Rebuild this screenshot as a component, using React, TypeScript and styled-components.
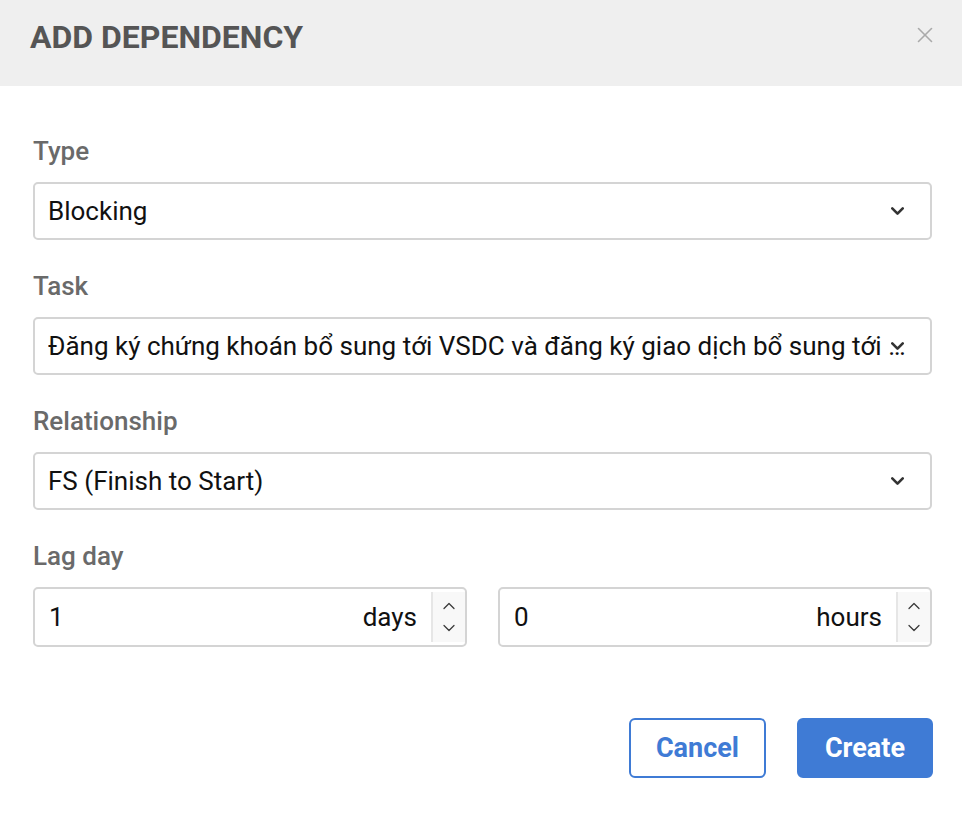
import React from 'react'
import styled, { createGlobalStyle } from 'styled-components'
import { ChevronDown, ChevronUp, X } from 'lucide-react'

const GlobalStyle = createGlobalStyle`
  html, body {
    margin: 0;
    padding: 0;
    background: #ffffff;
    font-family: Roboto, "Noto Sans", "Liberation Sans", sans-serif;
  }
  * { box-sizing: border-box; }
`

const Modal = styled.div`
  width: 962px;
  min-height: 824px;
  background: #fff;
`

const Header = styled.div`
  height: 86px;
  background: #efefef;
  display: flex;
  align-items: flex-start;
  justify-content: space-between;
  padding: 18px 24px 0 30px;
  h1 {
    margin: 0;
    font-size: 32px;
    line-height: 38px;
    font-weight: 700;
    color: #555;
  }
`

const CloseBtn = styled.button`
  border: none;
  background: transparent;
  padding: 0;
  margin-top: 4px;
  color: #aaa;
  display: flex;
  cursor: pointer;
`

const Body = styled.div`
  padding: 52px 30px 0 33px;
`

const Field = styled.div`
  margin-bottom: 33px;
`

const Label = styled.div`
  font-size: 26px;
  line-height: 26px;
  font-weight: 500;
  color: #6a6a6a;
  margin-bottom: 18px;
`

const Select = styled.div`
  position: relative;
  height: 58px;
  border: 2px solid #d4d4d4;
  border-radius: 5px;
  display: flex;
  align-items: center;
  padding: 0 22px 0 13px;
  font-size: 26px;
  color: #111;
  span {
    white-space: nowrap;
    overflow: hidden;
    text-overflow: ellipsis;
  }
  svg {
    position: absolute;
    right: 22px;
    top: 50%;
    transform: translateY(-50%);
    color: #333;
  }
`

const LagRow = styled.div`
  display: grid;
  grid-template-columns: 1fr 1fr;
  gap: 31px;
`

const NumberBox = styled.div`
  height: 60px;
  border: 2px solid #d4d4d4;
  border-radius: 5px;
  display: flex;
  align-items: stretch;
  overflow: hidden;
  input {
    flex: 1;
    min-width: 0;
    border: none;
    outline: none;
    background: transparent;
    font: inherit;
    font-size: 26px;
    color: #111;
    padding: 0 0 0 14px;
  }
`

const Suffix = styled.span`
  display: flex;
  align-items: center;
  font-size: 26px;
  color: #111;
  padding: 0 14px 0 8px;
`

const Spinner = styled.div`
  width: 34px;
  border-left: 2px solid #e6e6e6;
  background: #f8f8f8;
  margin: 3px 0;
  display: flex;
  flex-direction: column;
  align-items: center;
  justify-content: center;
  gap: 2px;
  color: #3a3a3a;
`

const Footer = styled.div`
  display: flex;
  justify-content: flex-end;
  gap: 31px;
  padding: 71px 29px 0 0;
`

const Button = styled.button<{ $primary?: boolean }>`
  height: 60px;
  padding: 0 ${p => (p.$primary ? '26px' : '25px')};
  border-radius: 6px;
  border: 2px solid #3f7bd5;
  background: ${p => (p.$primary ? '#3f7bd5' : '#fff')};
  color: ${p => (p.$primary ? '#fff' : '#3f7bd5')};
  font-family: inherit;
  font-size: 27px;
  font-weight: 700;
  cursor: pointer;
`

function SelectField({ label, value }: { label: string; value: string }) {
  return (
    <Field>
      <Label>{label}</Label>
      <Select>
        <span>{value}</span>
        <ChevronDown size={21} strokeWidth={3} />
      </Select>
    </Field>
  )
}

function NumberField({ value, unit }: { value: string; unit: string }) {
  return (
    <NumberBox>
      <input type="text" defaultValue={value} />
      <Suffix>{unit}</Suffix>
      <Spinner>
        <ChevronUp size={20} strokeWidth={1.5} />
        <ChevronDown size={20} strokeWidth={1.5} />
      </Spinner>
    </NumberBox>
  )
}

export default function App() {
  return (
    <Modal>
      <GlobalStyle />
      <Header>
        <h1>ADD DEPENDENCY</h1>
        <CloseBtn aria-label="close">
          <X size={26} strokeWidth={1.5} />
        </CloseBtn>
      </Header>
      <Body>
        <SelectField label="Type" value="Blocking" />
        <SelectField
          label="Task"
          value="Đăng ký chứng khoán bổ sung tới VSDC và đăng ký giao dịch bổ sung tới Sở giao dịch chứng khoán"
        />
        <SelectField label="Relationship" value="FS (Finish to Start)" />
        <Label>Lag day</Label>
        <LagRow>
          <NumberField value="1" unit="days" />
          <NumberField value="0" unit="hours" />
        </LagRow>
      </Body>
      <Footer>
        <Button>Cancel</Button>
        <Button $primary>Create</Button>
      </Footer>
    </Modal>
  )
}
